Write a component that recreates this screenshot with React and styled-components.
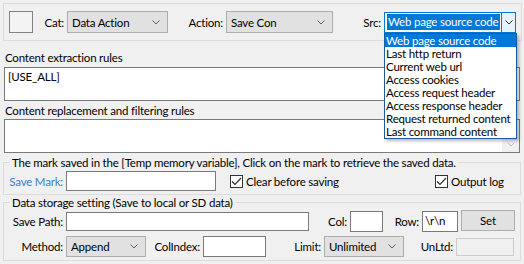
import React from "react";
import styled, { createGlobalStyle } from "styled-components";

const Global = createGlobalStyle`
  html, body { margin: 0; padding: 0; background: #f0f0f0; }
  body { font-family: Lato, "Noto Sans", sans-serif; font-size: 11.5px; letter-spacing: -0.2px; color: #000; }
  * { box-sizing: border-box; }
`;

const Window = styled.div`
  width: 524px;
  height: 264px;
  padding: 3px 2px 0 3px;
  display: flex;
  flex-direction: column;
  overflow: hidden;
  position: relative;
`;

const TopPanel = styled.div`
  height: 38px;
  border: 1px solid #dcdcdc;
  display: flex;
  align-items: center;
  padding-left: 5px;
`;

const Swatch = styled.div`
  width: 24px;
  height: 22px;
  border: 1px solid #828282;
  background: #f3f3f3;
`;

const Lbl = styled.div`
  width: ${(p) => p.$w}px;
  flex: none;
  text-align: right;
  padding-right: 3px;
  white-space: nowrap;
  line-height: 15px;
  color: ${(p) => (p.$blue ? "#3b7fcf" : "#000")};
`;

const ComboBox = styled.div`
  position: relative;
  width: ${(p) => p.$w}px;
  height: ${(p) => p.$h || 21}px;
  flex: none;
  display: flex;
  align-items: center;
  background: ${(p) => (p.$focus ? "#fff" : "#e1e1e1")};
  border: 1px solid ${(p) => (p.$focus ? "#0078d7" : "#adadad")};
  padding-left: ${(p) => (p.$focus ? 2 : 4)}px;
  line-height: 15px;
  white-space: nowrap;
`;

const ComboText = styled.span`
  flex: 1;
  overflow: hidden;
`;

const Selected = styled.span`
  background: #0078d7;
  color: #fff;
  padding: 0 2px 0 1px;
  line-height: 16px;
  display: inline-block;
`;

const ChevronWrap = styled.div`
  width: ${(p) => (p.$btn ? 14 : 16)}px;
  align-self: stretch;
  display: flex;
  align-items: center;
  justify-content: center;
  flex: none;
  margin-right: ${(p) => (p.$btn ? 0 : 3)}px;
  background: ${(p) => (p.$btn ? "#e5f1fb" : "transparent")};
  border-left: ${(p) => (p.$btn ? "1px solid #0078d7" : "none")};
`;

const Chevron = ({ color = "#606060" }) => (
  <svg width="8" height="5" viewBox="0 0 8 5">
    <polyline points="0.5,0.5 4,4 7.5,0.5" fill="none" stroke={color} strokeWidth="1" />
  </svg>
);

const DropList = styled.ul`
  position: absolute;
  left: -1px;
  top: 20px;
  width: 133px;
  margin: 0;
  padding: 0;
  list-style: none;
  background: #fff;
  border: 1px solid #1e5b9c;
  box-shadow: 2px 2px 3px rgba(0, 0, 0, 0.28);
  z-index: 10;
`;

const DropItem = styled.li`
  height: 13px;
  line-height: 13px;
  padding-left: 1px;
  white-space: nowrap;
  background: ${(p) => (p.$active ? "#0078d7" : "transparent")};
  color: ${(p) => (p.$active ? "#fff" : "#000")};
`;

const SectionLabel = styled.div`
  line-height: 15px;
  padding-left: 2px;
  margin-top: ${(p) => p.$mt}px;
`;

const TextArea = styled.div`
  margin-top: ${(p) => p.$mt}px;
  margin-left: 1px;
  width: 516px;
  height: 34px;
  background: #fff;
  border: 1px solid #7a7a7a;
  display: flex;
`;

const AreaText = styled.div`
  flex: 1;
  padding: 1px 3px;
  line-height: 15px;
`;

const ScrollBar = styled.div`
  width: 17px;
  background: #f0f0f0;
  display: flex;
  align-items: flex-end;
  justify-content: center;
  padding-bottom: 5px;
`;

const Group = styled.fieldset`
  margin: ${(p) => p.$mt}px 0 0 0;
  padding: 0;
  min-inline-size: 0;
  width: 518px;
  height: ${(p) => p.$h}px;
  border: 1px solid #dcdcdc;
  display: flex;
  flex-direction: column;
`;

const Legend = styled.legend`
  margin-left: 6px;
  padding: 0 2px;
  line-height: 15px;
  white-space: nowrap;
`;

const Row = styled.div`
  display: flex;
  align-items: center;
  height: ${(p) => p.$h}px;
  margin-top: ${(p) => p.$mt || 0}px;
`;

const Input = styled.div`
  width: ${(p) => p.$w}px;
  height: ${(p) => p.$h || 19}px;
  flex: none;
  background: ${(p) => (p.$disabled ? "#f0f0f0" : "#fff")};
  border: 1px solid ${(p) => (p.$disabled ? "#cccccc" : "#7a7a7a")};
  padding: 0 2px;
  line-height: 17px;
  white-space: nowrap;
`;

const Button = styled.div`
  width: ${(p) => p.$w}px;
  height: 21px;
  margin-left: ${(p) => p.$ml}px;
  margin-top: -2px;
  flex: none;
  background: #e1e1e1;
  border: 1px solid #adadad;
  display: flex;
  align-items: center;
  justify-content: center;
`;

const CheckItem = styled.label`
  display: flex;
  align-items: center;
  width: ${(p) => (p.$w ? `${p.$w}px` : "auto")};
  margin-left: ${(p) => p.$ml || 0}px;
  flex: none;
  white-space: nowrap;
`;

const Box = styled.span`
  width: 13px;
  height: 13px;
  border: 1px solid #333;
  background: #fff;
  margin-right: 3px;
  display: flex;
  align-items: center;
  justify-content: center;
`;

const Check = ({ label, w, ml }) => (
  <CheckItem $w={w} $ml={ml}>
    <Box>
      <svg width="11" height="9" viewBox="0 0 11 9">
        <polyline points="1,4.5 4,7.5 10,1" fill="none" stroke="#333" strokeWidth="1.2" />
      </svg>
    </Box>
    {label}
  </CheckItem>
);

const srcOptions = [
  "Web page source code",
  "Last http return",
  "Current web url",
  "Access cookies",
  "Access request header",
  "Access response header",
  "Request returned content",
  "Last command content",
];

export default function App() {
  return (
    <>
      <Global />
      <Window>
        <TopPanel>
          <Swatch />
          <Lbl $w={34}>Cat:</Lbl>
          <ComboBox $w={101} $h={22}>
            <ComboText>Data Action</ComboText>
            <ChevronWrap><Chevron /></ChevronWrap>
          </ComboBox>
          <Lbl $w={58}>Action:</Lbl>
          <ComboBox $w={107} $h={22}>
            <ComboText>Save Con</ComboText>
            <ChevronWrap><Chevron /></ChevronWrap>
          </ComboBox>
          <Lbl $w={51}>Src:</Lbl>
          <ComboBox $w={132} $h={21} $focus>
            <ComboText><Selected>Web page source code</Selected></ComboText>
            <ChevronWrap $btn><Chevron color="#333" /></ChevronWrap>
            <DropList>
              {srcOptions.map((o, i) => (
                <DropItem key={o} $active={i === 0}>{o}</DropItem>
              ))}
            </DropList>
          </ComboBox>
        </TopPanel>

        <SectionLabel $mt={9}>Content extraction rules</SectionLabel>
        <TextArea $mt={2}>
          <AreaText>[USE_ALL]</AreaText>
        </TextArea>

        <SectionLabel $mt={2}>Content replacement and filtering rules</SectionLabel>
        <TextArea $mt={1}>
          <AreaText />
          <ScrollBar><Chevron color="#c4c4c4" /></ScrollBar>
        </TextArea>

        <Group $mt={2} $h={40}>
          <Legend>The mark saved in the [Temp memory variable], Click on the mark to retrieve the saved data.</Legend>
          <Row $h={20} $mt={1}>
            <Lbl $w={62} $blue>Save Mark:</Lbl>
            <Input $w={150} $h={20} />
            <Check label="Clear before saving" w={205} ml={14} />
            <Check label="Output log" />
          </Row>
        </Group>

        <Group $mt={0} $h={66}>
          <Legend>Data storage setting (Save to local or SD data)</Legend>
          <Row $h={22} $mt={0}>
            <Lbl $w={62}>Save Path:</Lbl>
            <Input $w={243} />
            <Lbl $w={41}>Col:</Lbl>
            <Input $w={33} $h={21} />
            <Lbl $w={39}>Row:</Lbl>
            <Input $w={36} $h={21}>\r\n</Input>
            <Button $w={54} $ml={3}>Set</Button>
          </Row>
          <Row $h={21} $mt={4}>
            <Lbl $w={62}>Method:</Lbl>
            <ComboBox $w={80}>
              <ComboText>Append</ComboText>
              <ChevronWrap><Chevron /></ChevronWrap>
            </ComboBox>
            <Lbl $w={57}>ColIndex:</Lbl>
            <Input $w={63} $h={21} />
            <Lbl $w={58}>Limit:</Lbl>
            <ComboBox $w={80}>
              <ComboText>Unlimited</ComboText>
              <ChevronWrap><Chevron /></ChevronWrap>
            </ComboBox>
            <Lbl $w={52}>UnLtd:</Lbl>
            <Input $w={58} $h={18} $disabled />
          </Row>
        </Group>
      </Window>
    </>
  );
}
